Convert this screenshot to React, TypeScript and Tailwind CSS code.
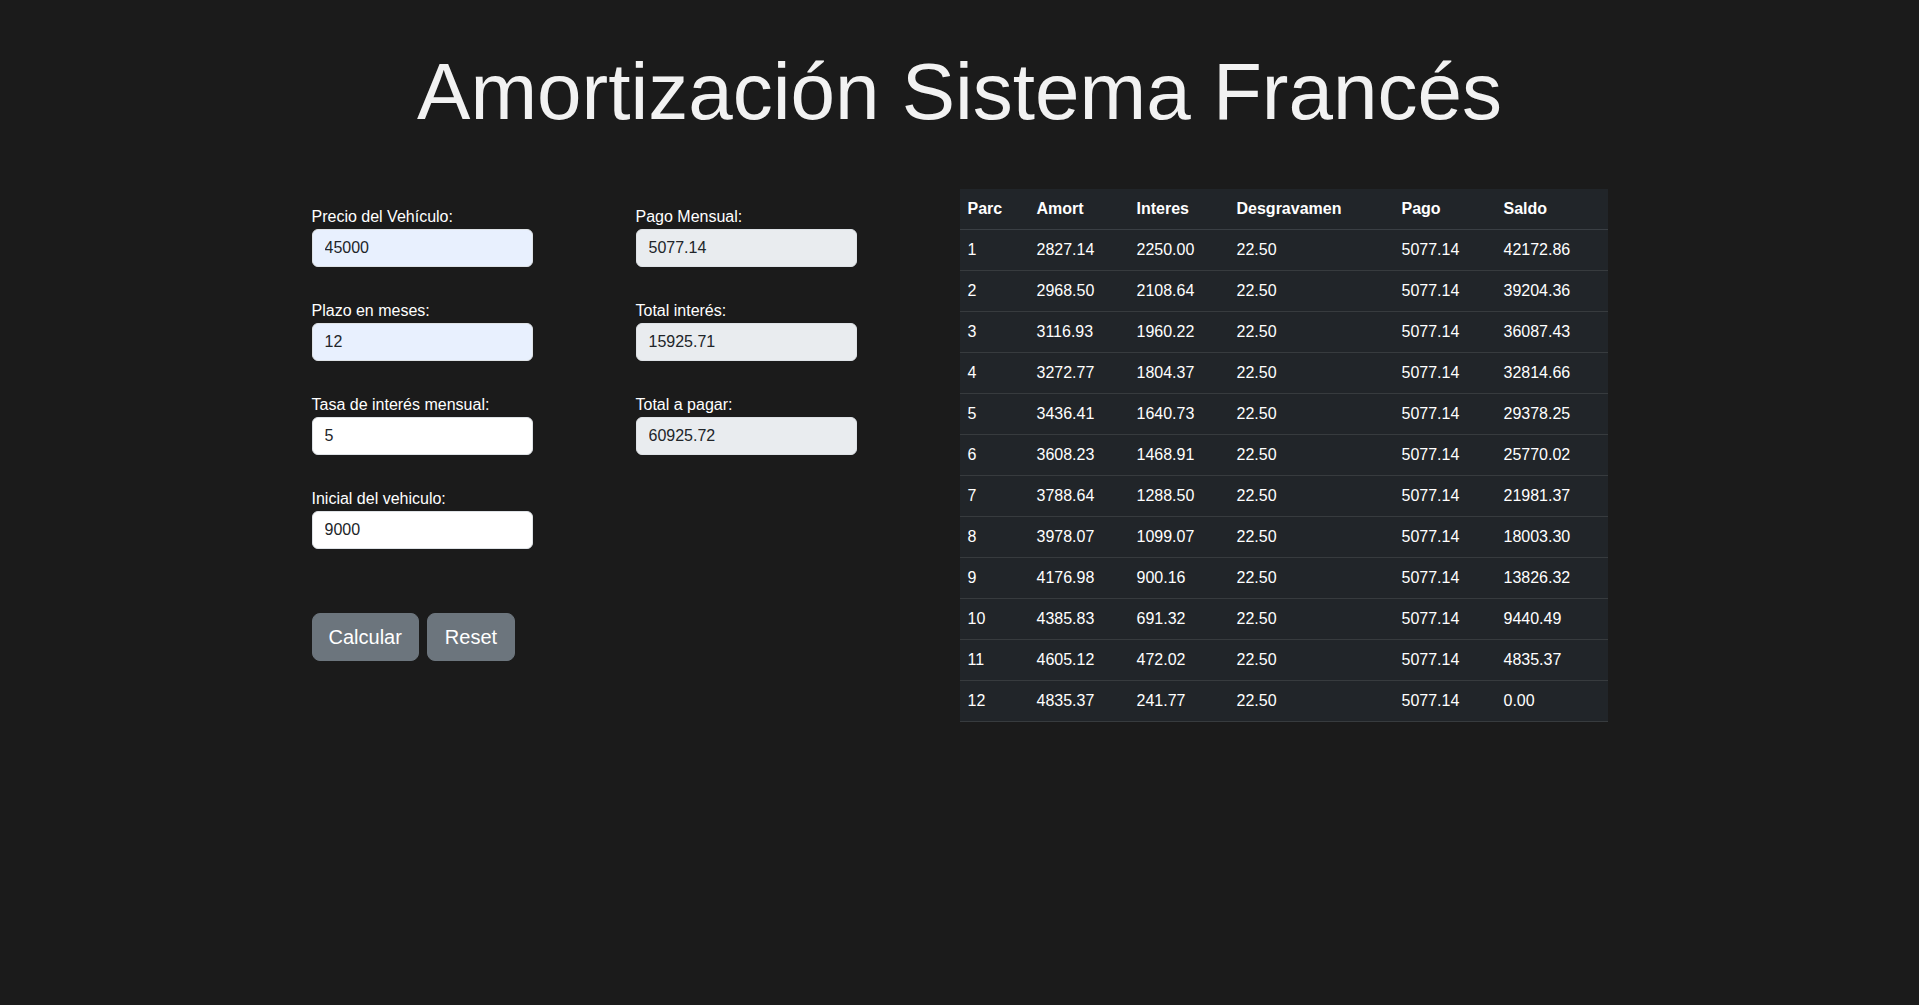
import React from "react";

const rows = [
  ["1", "2827.14", "2250.00", "22.50", "5077.14", "42172.86"],
  ["2", "2968.50", "2108.64", "22.50", "5077.14", "39204.36"],
  ["3", "3116.93", "1960.22", "22.50", "5077.14", "36087.43"],
  ["4", "3272.77", "1804.37", "22.50", "5077.14", "32814.66"],
  ["5", "3436.41", "1640.73", "22.50", "5077.14", "29378.25"],
  ["6", "3608.23", "1468.91", "22.50", "5077.14", "25770.02"],
  ["7", "3788.64", "1288.50", "22.50", "5077.14", "21981.37"],
  ["8", "3978.07", "1099.07", "22.50", "5077.14", "18003.30"],
  ["9", "4176.98", "900.16", "22.50", "5077.14", "13826.32"],
  ["10", "4385.83", "691.32", "22.50", "5077.14", "9440.49"],
  ["11", "4605.12", "472.02", "22.50", "5077.14", "4835.37"],
  ["12", "4835.37", "241.77", "22.50", "5077.14", "0.00"],
];

const widths = ["w-[69px]", "w-[100px]", "w-[100px]", "w-[165px]", "w-[102px]", "w-[112px]"];
const headers = ["Parc", "Amort", "Interes", "Desgravamen", "Pago", "Saldo"];

function Field({ label, value, kind }: { label: string; value: string; kind: "auto" | "plain" | "ro" }) {
  const bg = kind === "auto" ? "bg-[#e8f0fe]" : kind === "plain" ? "bg-white" : "bg-[#e9ecef]";
  return (
    <div className="flex flex-col">
      <label className="text-[16px] leading-[24px] text-white">{label}</label>
      <input
        readOnly
        value={value}
        className={`w-[221px] h-[38px] rounded-[6px] border border-[#dee2e6] px-[12px] text-[16px] leading-[24px] text-[#212529] outline-none ${bg}`}
      />
    </div>
  );
}

export default function App() {
  return (
    <div className="min-h-screen bg-[#1b1b1b] text-white font-['Liberation_Sans',Arial,sans-serif]">
      <h1 className="pt-[44px] text-center text-[80px] leading-[96px] font-normal text-[#f2f2f2]">
        Amortización Sistema Francés
      </h1>
      <div className="mx-auto mt-[48px] flex w-[1296px]">
        <div className="w-[648px] pt-[17px]">
          <div className="flex">
            <div className="flex w-[324px] flex-col gap-[32px]">
              <Field label="Precio del Vehículo:" value="45000" kind="auto" />
              <Field label="Plazo en meses:" value="12" kind="auto" />
              <Field label="Tasa de interés mensual:" value="5" kind="plain" />
              <Field label="Inicial del vehiculo:" value="9000" kind="plain" />
            </div>
            <div className="flex w-[324px] flex-col gap-[32px]">
              <Field label="Pago Mensual:" value="5077.14" kind="ro" />
              <Field label="Total interés:" value="15925.71" kind="ro" />
              <Field label="Total a pagar:" value="60925.72" kind="ro" />
            </div>
          </div>
          <div className="mt-[64px] flex gap-[8px]">
            <button className="h-[48px] rounded-[8px] border border-[#6c757d] bg-[#6c757d] px-[16px] text-[20px] leading-[30px] text-white">
              Calcular
            </button>
            <button className="h-[48px] rounded-[8px] border border-[#6c757d] bg-[#6c757d] px-[17px] text-[20px] leading-[30px] text-white">
              Reset
            </button>
          </div>
        </div>
        <div className="w-[648px] pt-[1px]">
          <table className="w-[648px] table-fixed border-collapse bg-[#212529] text-[16px] leading-[24px] text-white">
            <thead>
              <tr className="border-b border-[#3a3f44]">
                {headers.map((h, i) => (
                  <th key={h} className={`${widths[i]} p-[8px] text-left font-bold`}>
                    {h}
                  </th>
                ))}
              </tr>
            </thead>
            <tbody>
              {rows.map((r) => (
                <tr key={r[0]} className="border-b border-[#373b3e]">
                  {r.map((c, i) => (
                    <td key={i} className="p-[8px] text-left">
                      {c}
                    </td>
                  ))}
                </tr>
              ))}
            </tbody>
          </table>
        </div>
      </div>
    </div>
  );
}
